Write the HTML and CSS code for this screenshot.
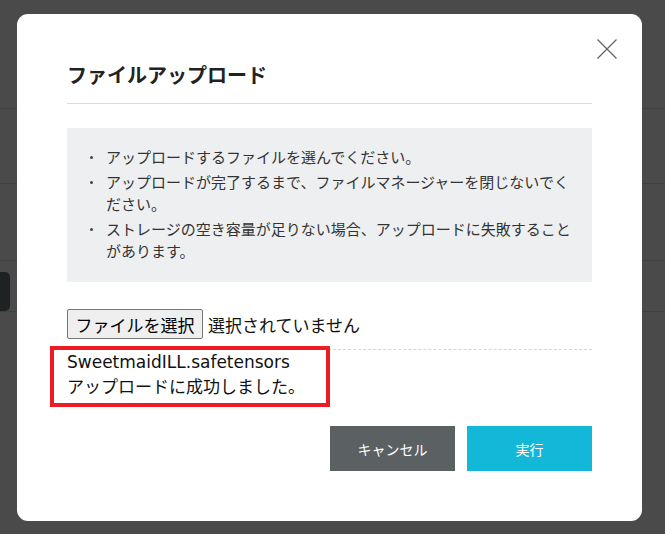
FILE: index.html
```html
<!DOCTYPE html>
<html lang="ja">
    <head>
        <meta charset="UTF-8" />
        <meta name="viewport" content="width=device-width, initial-scale=1.0" />
        <title>ファイルアップロード</title>

        <link rel="stylesheet" href="styles.css">
    </head>
    <body>
        <div class="page">
            <div class="row row-top"></div>
            <div class="row row-mid"></div>
            <div class="row row-mid2"></div>
            <div class="row row-tool">
                <div class="tool-icon"></div>
            </div>
        </div>

        <div class="modal">
            <a class="close" href="javascript:void(0)">
                <svg width="20" height="20" viewBox="0 0 20 20">
                    <path d="M0.5 0.5 L19.5 19.5 M19.5 0.5 L0.5 19.5" stroke="#666" stroke-width="1.3" fill="none" />
                </svg>
            </a>

            <header class="modal-header">
                <h2>ファイルアップロード</h2>
            </header>

            <div class="notice">
                <ul>
                    <li>アップロードするファイルを選んでください。</li>
                    <li>アップロードが完了するまで、ファイルマネージャーを閉じないでください。</li>
                    <li>ストレージの空き容量が足りない場合、アップロードに失敗することがあります。</li>
                </ul>
            </div>

            <div class="file-row">
                <button class="file-btn">ファイルを選択</button>
                <span class="file-name">選択されていません</span>
            </div>

            <div class="result">
                <p class="result-file">SweetmaidILL.safetensors</p>
                <p>アップロードに成功しました。</p>
                <div class="highlight"></div>
            </div>

            <div class="actions">
                <button class="btn cancel">キャンセル</button>
                <button class="btn run">実行</button>
            </div>
        </div>
    </body>
</html>
```

FILE: styles.css
```css
* {
    box-sizing: border-box;
    font-family: "Noto Sans CJK JP", "Noto Sans", sans-serif;
}
body {
    margin: 0;
    background: #4a4a4a;
    overflow: hidden;
}
.row {
    border-bottom: 1px solid #404040;
}
.row-top {
    height: 109px;
}
.row-mid {
    height: 75px;
}
.row-mid2 {
    height: 77px;
}
.row-tool {
    padding-top: 11px;
}
.tool-icon {
    width: 40px;
    height: 39px;
    margin-left: -30px;
    background: #1f2223;
    border-radius: 5px;
}

.modal {
    position: fixed;
    left: 17px;
    top: 14px;
    width: 625px;
    height: 507px;
    padding: 46px 50px 50px;
    background: #fff;
    border-radius: 11px;
}
.close {
    position: absolute;
    top: 25px;
    right: 25px;
    width: 20px;
    height: 20px;
    line-height: 0;
}
.modal-header {
    padding-bottom: 14px;
    border-bottom: 1px solid #dcdcdc;
}
.modal-header h2 {
    margin: 0;
    font-size: 20px;
    font-weight: bold;
    line-height: 29px;
    color: #222;
}

.notice {
    margin-top: 24px;
    padding: 18px 17px 20px 23px;
    background: #eeeff1;
    color: #333;
}
.notice ul {
    margin: 0;
    padding: 0;
    list-style: none;
}
.notice li {
    display: flex;
    font-size: 15px;
    line-height: 22px;
}
.notice li + li {
    margin-top: 3px;
}
.notice li::before {
    content: "";
    flex-shrink: 0;
    width: 3px;
    height: 3px;
    margin: 10px 13px 0 0;
    border-radius: 50%;
    background: #444;
}

.file-row {
    display: flex;
    align-items: center;
    gap: 5px;
    margin-top: 27px;
    padding-bottom: 10px;
    border-bottom: 1px dashed #d6d6d6;
}
.file-btn {
    width: 136px;
    height: 30px;
    padding: 0;
    font-size: 17px;
    color: #000;
    background: #efefef;
    border: 1px solid #767676;
    border-radius: 2px;
}
.file-name {
    font-size: 17px;
    color: #111;
}

.result {
    position: relative;
}
.result p {
    margin: 0;
    font-size: 17px;
    line-height: 24px;
    color: #111;
}
.result .result-file {
    font-family: "DejaVu Sans", "Noto Sans CJK JP", sans-serif;
}
.highlight {
    position: absolute;
    left: -17px;
    top: -4px;
    width: 280px;
    height: 61px;
    border: 4px solid #ed1c24;
}

.actions {
    display: flex;
    justify-content: flex-end;
    gap: 12px;
    margin-top: 28px;
}
.btn {
    width: 125px;
    height: 45px;
    border: none;
    font-size: 14px;
    color: #fff;
    cursor: pointer;
}
.cancel {
    background: #5b6062;
}
.run {
    background: #13b8d9;
}
```
